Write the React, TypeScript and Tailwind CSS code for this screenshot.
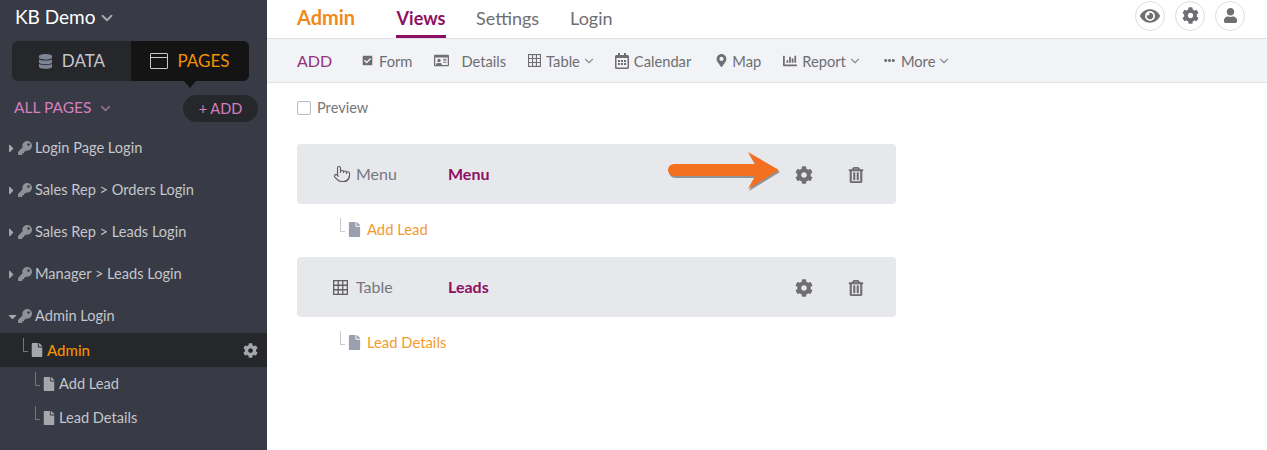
import type { ReactNode } from "react";
import {
  FaCaretDown,
  FaCaretRight,
  FaChartBar,
  FaCheckSquare,
  FaCog,
  FaDatabase,
  FaEllipsisH,
  FaEye,
  FaFile,
  FaKey,
  FaMapMarkerAlt,
  FaRegCalendarAlt,
  FaRegIdCard,
  FaRegTrashAlt,
  FaUser,
} from "react-icons/fa";
import { LuChevronDown, LuPointer } from "react-icons/lu";

function Chevron({ className }: { className: string }) {
  return <LuChevronDown className={className} strokeWidth={2.5} />;
}

function Elbow({ className }: { className: string }) {
  return <span className={`block w-[5px] border-b border-l ${className}`} />;
}

// square 3x3 grid, the icon for a table
function TableIcon({ size }: { size: number }) {
  return (
    <svg width={size} height={size} viewBox="0 0 14 14" fill="none" stroke="currentColor" strokeWidth="1.2">
      <rect x="0.6" y="0.6" width="12.8" height="12.8" />
      <path d="M0.6 4.9h12.8M0.6 9.1h12.8M4.9 0.6v12.8M9.1 0.6v12.8" />
    </svg>
  );
}

function LoginRow({ label, open }: { label: string; open?: boolean }) {
  return (
    <div className={`flex h-[42px] items-center pl-[7px] text-[14.6px] text-[#c4c6cb] ${open ? "-mb-[4px]" : ""}`}>
      {open ? (
        <FaCaretDown className="w-[11px] text-[#a5a7ac]" size={13} />
      ) : (
        <FaCaretRight className="w-[9px] text-[#a5a7ac]" size={13} />
      )}
      <FaKey className={`mr-[3px] text-[#8f9197] ${open ? "" : "ml-[2px]"}`} size={14} />
      <span>{label}</span>
    </div>
  );
}

function PageRow({ label }: { label: string }) {
  return (
    <div className="flex h-[34px] items-center pl-[35px] text-[14.6px] text-[#c4c6cb]">
      <Elbow className="mb-[10px] h-[14px] border-[#74767d]" />
      <FaFile className="ml-[2px] mr-[3px] text-[#a5a7ac]" size={14} />
      <span>{label}</span>
    </div>
  );
}

function Sidebar() {
  return (
    <aside className="flex h-[450px] w-[267px] shrink-0 flex-col bg-[#383b45]">
      <div className="flex h-[34px] items-center pl-[15px] text-[19px] text-white">
        KB Demo
        <Chevron className="ml-[3px] mt-[2px] size-[18px] text-[#a5a7ac]" />
      </div>
      <div className="relative ml-[12px] mt-[7px] flex h-[40px] w-[237px] rounded-[6px] bg-[#26272b] text-[17px]">
        <div className="flex w-[119px] items-center justify-center gap-[9px] text-[#c4c6cb]">
          <FaDatabase className="text-[#7c8496]" size={15} />
          DATA
        </div>
        <div className="flex flex-1 items-center justify-center gap-[9px] rounded-r-[6px] bg-[#141414] text-[#f39200]">
          <span className="block h-[16px] w-[18px] rounded-[1px] border border-[#c9c9c9] pt-[3px]">
            <span className="block border-t border-[#c9c9c9]" />
          </span>
          PAGES
        </div>
        <span className="absolute left-[172px] top-[40px] border-x-[6px] border-t-[7px] border-x-transparent border-t-[#141414]" />
      </div>
      <div className="mt-[14px] flex h-[27px] items-center justify-between pl-[14px] pr-[9px] text-[15.5px] text-[#d57fc0]">
        <div className="-mt-[1px] flex items-center gap-[7px]">
          ALL PAGES
          <Chevron className="mt-[1px] size-[15px] text-[#8f7489]" />
        </div>
        <div className="flex h-[27px] w-[75px] items-center justify-center rounded-full bg-[#26272b] text-[14.5px]">
          + ADD
        </div>
      </div>
      <div className="mt-[5px]">
        <LoginRow label="Login Page Login" />
        <LoginRow label="Sales Rep > Orders Login" />
        <LoginRow label="Sales Rep > Leads Login" />
        <LoginRow label="Manager > Leads Login" />
        <LoginRow label="Admin Login" open />
      </div>
      <div className="flex h-[34px] items-center bg-[#26272b] pl-[23px] pr-[9px] text-[15px] font-medium text-[#f39200]">
        <Elbow className="mb-[10px] h-[14px] border-[#74767d]" />
        <FaFile className="ml-[2px] mr-[3px] text-[#a5a7ac]" size={14} />
        <span className="flex-1">Admin</span>
        <FaCog className="text-[#a5a7ac]" size={15} />
      </div>
      <PageRow label="Add Lead" />
      <PageRow label="Lead Details" />
    </aside>
  );
}

function RoundButton({ children }: { children: ReactNode }) {
  return (
    <div className="flex size-[30px] items-center justify-center rounded-full border border-[#dcdcdc] text-[#6e6e73]">
      {children}
    </div>
  );
}

function TopBar() {
  return (
    <div className="flex h-[39px] items-center border-b border-[#dfe0e4] pl-[30px] pr-[22px]">
      <span className="w-[99px] pb-[5px] text-[20px] font-bold text-[#ef8a17]">Admin</span>
      <div className="flex h-[38px] w-[50px] items-center justify-center border-b-[3px] border-[#8d0f63] pt-[2px] text-[18px] font-bold text-[#8d0f63]">
        Views
      </div>
      <span className="ml-[30px] pb-[1px] text-[18px] text-[#6e6e73]">Settings</span>
      <span className="ml-[31px] pb-[1px] text-[18px] text-[#6e6e73]">Login</span>
      <div className="ml-auto flex gap-[10px] pb-[8px] pt-[1px]">
        <RoundButton>
          <FaEye size={20} />
        </RoundButton>
        <RoundButton>
          <FaCog size={17} />
        </RoundButton>
        <RoundButton>
          <FaUser size={15} />
        </RoundButton>
      </div>
    </div>
  );
}

function ToolItem({
  icon,
  label,
  className,
  iconGap,
  menu,
}: {
  icon: ReactNode;
  label: string;
  className?: string;
  iconGap: string;
  menu?: boolean;
}) {
  return (
    <div className={`flex items-center ${className ?? ""}`}>
      <span className={iconGap}>{icon}</span>
      <span>{label}</span>
      {menu && <LuChevronDown className="ml-[2px] size-[14px] text-[#8d8d92]" strokeWidth={2} />}
    </div>
  );
}

function Toolbar() {
  return (
    <div className="flex h-[44px] items-center border-b border-[#e2e3e7] bg-[#f2f3f7] pl-[30px] pt-[1px] text-[14.7px] text-[#6e6e73]">
      <span className="w-[65px] text-[16px] text-[#93307a]">ADD</span>
      <ToolItem iconGap="mr-[6px]" icon={<FaCheckSquare size={11} />} label="Form" />
      <ToolItem className="ml-[22px]" iconGap="mr-[12px]" icon={<FaRegIdCard size={15} />} label="Details" />
      <ToolItem className="ml-[22px]" iconGap="mr-[5px]" icon={<TableIcon size={13} />} label="Table" menu />
      <ToolItem className="ml-[18px]" iconGap="mr-[4px]" icon={<FaRegCalendarAlt size={16} />} label="Calendar" />
      <ToolItem className="ml-[24px]" iconGap="mr-[4px]" icon={<FaMapMarkerAlt size={13} />} label="Map" />
      <ToolItem className="ml-[22px]" iconGap="mr-[5px]" icon={<FaChartBar size={14} />} label="Report" menu />
      <ToolItem className="ml-[22px]" iconGap="mr-[6px]" icon={<FaEllipsisH size={11} />} label="More" menu />
    </div>
  );
}

function Arrow() {
  return (
    <svg className="absolute left-[368px] top-[7px]" width="118" height="42" viewBox="0 0 118 42">
      <path d="M9 13h81L83 1l31 18-31 19 7-13H9a6 6 0 0 1 0-12z" fill="#4a4a4a" opacity="0.55" transform="translate(1 2)" />
      <path d="M9 13h81L83 1l31 18-31 19 7-13H9a6 6 0 0 1 0-12z" fill="#f37021" />
    </svg>
  );
}

function ViewCard({ icon, type, name, arrow }: { icon: ReactNode; type: string; name: string; arrow?: boolean }) {
  return (
    <div className="relative flex h-[60px] w-[599px] items-center rounded-[4px] bg-[#e7e8ec] pl-[36px] text-[#8b8b90]">
      <span className="flex w-[23px] justify-start text-[#5f5f64]">{icon}</span>
      <span className="w-[92px] text-[16px] text-[#77777c]">{type}</span>
      <span className="text-[16px] font-bold text-[#8d0f63]">{name}</span>
      {arrow && <Arrow />}
      <FaCog className="absolute left-[498px] top-[22px] text-[#6e6e73]" size={18} />
      <FaRegTrashAlt className="absolute left-[551px] top-[23px] stroke-[20] text-[#6e6e73]" size={16} />
    </div>
  );
}

function ChildLink({ label }: { label: string }) {
  return (
    <div className="flex h-[53px] items-center pb-[3px] pl-[43px] text-[14.8px] text-[#f39a2e]">
      <Elbow className="mb-[8px] h-[14px] border-[#c9cad0]" />
      <FaFile className="ml-[2px] mr-[5px] text-[#9c9fae]" size={15} />
      <span>{label}</span>
    </div>
  );
}

export default function App() {
  return (
    <div className="flex h-[450px] w-[1267px] overflow-hidden bg-white font-['Lato','Open_Sans',sans-serif]">
      <Sidebar />
      <main className="flex-1">
        <TopBar />
        <Toolbar />
        <div className="pl-[30px]">
          <label className="flex h-[50px] items-center gap-[6px] text-[14.6px] text-[#77777c]">
            <span className="size-[14px] rounded-[2px] border border-[#b9bac0] bg-white" />
            Preview
          </label>
          <div className="mt-[11px]">
            <ViewCard icon={<LuPointer size={18} strokeWidth={1.5} />} type="Menu" name="Menu" arrow />
            <ChildLink label="Add Lead" />
            <ViewCard icon={<TableIcon size={15} />} type="Table" name="Leads" />
            <ChildLink label="Lead Details" />
          </div>
        </div>
      </main>
    </div>
  );
}
